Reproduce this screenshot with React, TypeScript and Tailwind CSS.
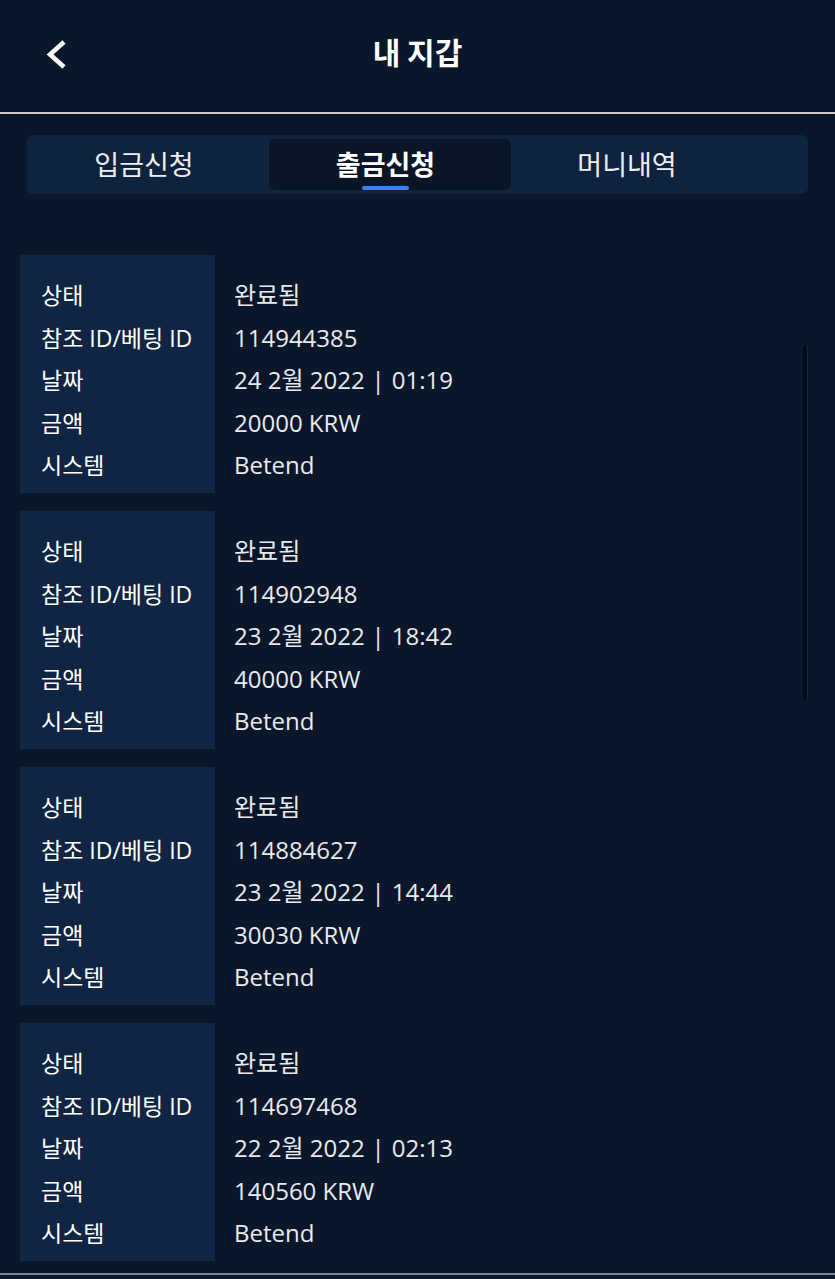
import React from 'react';

interface Tx {
  id: string;
  day: string;
  time: string;
  amount: string;
}

const txs: Tx[] = [
  { id: '114944385', day: '24 2월 2022', time: '01:19', amount: '20000 KRW' },
  { id: '114902948', day: '23 2월 2022', time: '18:42', amount: '40000 KRW' },
  { id: '114884627', day: '23 2월 2022', time: '14:44', amount: '30030 KRW' },
  { id: '114697468', day: '22 2월 2022', time: '02:13', amount: '140560 KRW' },
];

const labels = ['상태', '참조 ID/베팅 ID', '날짜', '금액', '시스템'];

const TxCard: React.FC<{ tx: Tx }> = ({ tx }) => {
  const values: React.ReactNode[] = [
    '완료됨',
    tx.id,
    <>
      {tx.day}
      <span className="mx-[7px]">|</span>
      {tx.time}
    </>,
    tx.amount,
    'Betend',
  ];
  return (
    <div className="flex h-[238px] leading-[42.5px]">
      <div className="w-[195px] bg-[#0f2543] pl-[21px] pt-[19px] text-[23px] text-white">
        {labels.map((l) => (
          <div key={l}>{l}</div>
        ))}
      </div>
      <div className="pl-[19px] pt-[19px] text-[24px] text-[#e8eaee]">
        {values.map((v, i) => (
          <div key={i}>{v}</div>
        ))}
      </div>
    </div>
  );
};

export default function App() {
  const tabs = ['입금신청', '출금신청', '머니내역'];
  return (
    <div
      className="relative w-[835px] h-[1279px] bg-[#0a162a] overflow-hidden text-white"
      style={{ fontFamily: '"Open Sans", "Noto Sans CJK KR", sans-serif' }}
    >
      {/* Header */}
      <div className="relative h-[114px] flex items-center justify-center border-b-2 border-[#c9cacc] pb-[10px]">
        <svg
          className="absolute left-[42px] top-[39px]"
          width="26"
          height="31"
          viewBox="0 0 26 31"
          fill="none"
          stroke="white"
          strokeWidth="4.5"
          strokeLinecap="butt"
          strokeLinejoin="miter"
        >
          <polyline points="22,3 8,15.5 22,28" />
        </svg>
        <h1 className="text-[30px] font-bold" style={{ fontFamily: '"Noto Sans CJK KR", sans-serif' }}>
          내 지갑
        </h1>
      </div>

      {/* Tabs */}
      <div className="mx-[27px] mt-[21px] h-[59px] rounded-[6px] bg-[#0f223e] flex items-center px-[1px]">
        {tabs.map((t, i) => (
          <div
            key={t}
            className={
              i === 1
                ? 'relative w-[242px] h-[51px] pr-[9px] rounded-[5px] bg-[#0a1628] flex items-center justify-center text-[27px] font-bold'
                : 'w-[241px] h-[51px] pr-[9px] flex items-center justify-center text-[27px] text-[#eef0f3]'
            }
            style={{ fontFamily: '"Noto Sans CJK KR", sans-serif' }}
          >
            {t}
            {i === 1 && (
              <span className="absolute bottom-[0px] left-[93px] w-[47px] h-[4px] rounded-full bg-[#3b82f6]" />
            )}
          </div>
        ))}
      </div>

      {/* List */}
      <div className="mt-[61px] mx-[20px] flex flex-col gap-[18px]">
        {txs.map((tx) => (
          <TxCard key={tx.id} tx={tx} />
        ))}
      </div>

      {/* Scrollbar */}
      <div className="absolute left-[803px] top-[345px] w-[5px] h-[355px] rounded-full bg-[#030b19] border-r border-[#13243d]" />

      {/* Bottom line */}
      <div className="absolute left-0 bottom-[4px] w-full h-[2px] bg-[#7d8594]" />
    </div>
  );
}
